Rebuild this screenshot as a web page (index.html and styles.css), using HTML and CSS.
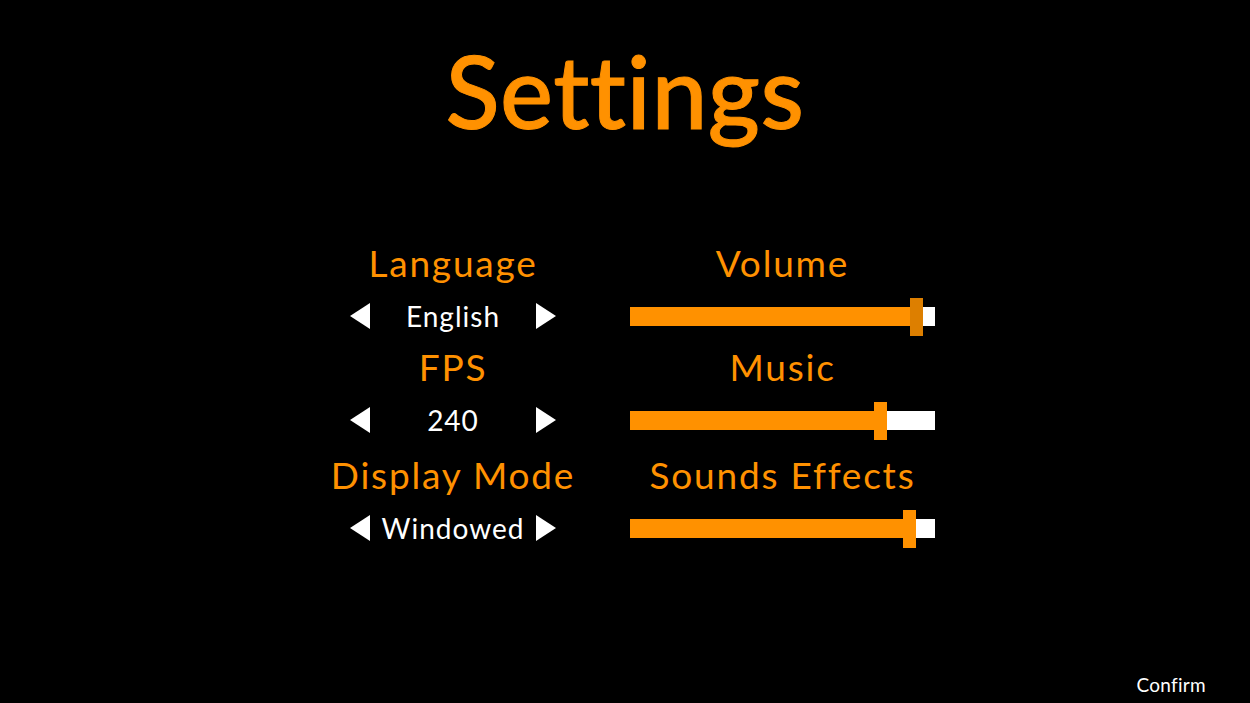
FILE: index.html
```html
<!DOCTYPE html>
<html>
<head>
<meta charset="utf-8">
<link rel="stylesheet" href="styles.css">
</head>
<body>
<div class="screen">
  <h1 class="title">Settings</h1>
  <div class="grid">
    <div class="cell">
      <div class="label">Language</div>
      <div class="picker">
        <span class="arrow left"></span>
        <span class="value">English</span>
        <span class="arrow right"></span>
      </div>
    </div>
    <div class="cell">
      <div class="label">Volume</div>
      <div class="slider"><div class="track"><div class="fill" style="width:91.8%"></div><div class="thumb dark" style="left:91.8%"></div></div></div>
    </div>
    <div class="cell">
      <div class="label">FPS</div>
      <div class="picker">
        <span class="arrow left"></span>
        <span class="value">240</span>
        <span class="arrow right"></span>
      </div>
    </div>
    <div class="cell">
      <div class="label">Music</div>
      <div class="slider"><div class="track"><div class="fill" style="width:80%"></div><div class="thumb" style="left:80%"></div></div></div>
    </div>
    <div class="cell third">
      <div class="label">Display Mode</div>
      <div class="picker">
        <span class="arrow left"></span>
        <span class="value">Windowed</span>
        <span class="arrow right"></span>
      </div>
    </div>
    <div class="cell third">
      <div class="label">Sounds Effects</div>
      <div class="slider"><div class="track"><div class="fill" style="width:89.5%"></div><div class="thumb" style="left:89.5%"></div></div></div>
    </div>
  </div>
  <div class="footer"><span class="confirm">Confirm</span></div>
</div>
</body>
</html>
```
FILE: styles.css
```css
html, body {
  margin: 0;
  padding: 0;
  background: #000;
}
body {
  width: 1250px;
  height: 703px;
  overflow: hidden;
  font-family: "Lato", "Noto Sans", sans-serif;
}
.screen {
  display: flex;
  flex-direction: column;
  height: 703px;
}
.title {
  margin: 0;
  padding-top: 37px;
  height: 130px;
  box-sizing: border-box;
  text-align: center;
  color: #ff9100;
  font-size: 100px;
  font-weight: 500;
  line-height: 106px;
  letter-spacing: 0.5px;
  -webkit-text-stroke: 1px #ff9100;
}
.grid {
  margin-top: 108px;
  display: grid;
  grid-template-columns: 250px 305px;
  column-gap: 52px;
  justify-content: center;
  padding-left: 13px;
}
.cell {
  display: flex;
  flex-direction: column;
}
.cell.third {
  margin-top: 4px;
}
.label {
  height: 52px;
  line-height: 50px;
  text-align: center;
  color: #ff9100;
  font-size: 37px;
  letter-spacing: 1.8px;
  white-space: nowrap;
}
.picker {
  height: 52px;
  display: flex;
  align-items: center;
  justify-content: space-between;
  padding: 0 22px;
}
.value {
  color: #fff;
  font-size: 28px;
  letter-spacing: 1px;
}
.arrow {
  width: 0;
  height: 0;
  border-top: 13px solid transparent;
  border-bottom: 13px solid transparent;
}
.arrow.left {
  border-right: 20px solid #fff;
}
.arrow.right {
  border-left: 20px solid #fff;
}
.slider {
  height: 52px;
  display: flex;
  align-items: center;
}
.track {
  position: relative;
  width: 305px;
  height: 19px;
  background: #fff;
}
.fill {
  height: 100%;
  background: #ff9100;
}
.thumb {
  position: absolute;
  top: -9px;
  width: 13px;
  height: 38px;
  background: #ff9100;
}
.thumb.dark {
  background: #dd7f00;
}
.footer {
  margin-top: auto;
  display: flex;
  justify-content: flex-end;
  padding: 0 44px 6px 0;
}
.confirm {
  color: #fff;
  font-size: 19px;
  line-height: 24px;
  letter-spacing: 0.3px;
}
```
